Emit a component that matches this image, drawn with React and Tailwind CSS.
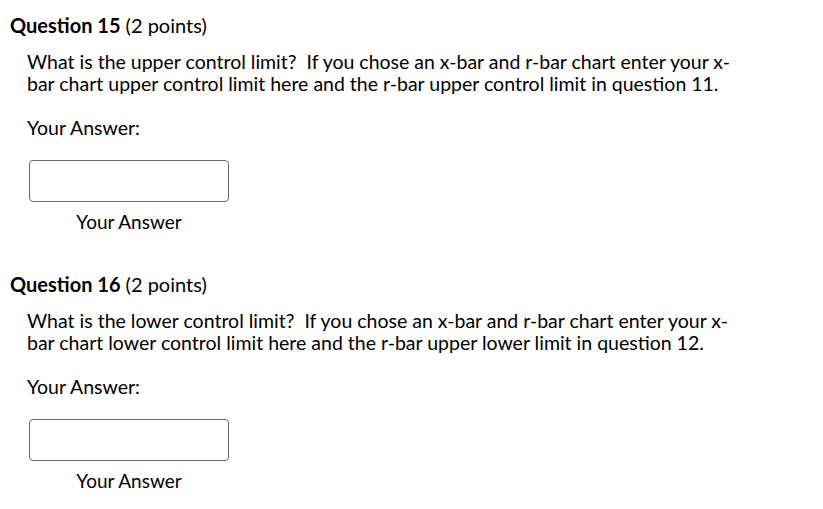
export default function App() {
  const questions = [
    {
      num: 15,
      lines: [
        'What is the upper control limit?\u00a0 If you chose an x-bar and r-bar chart enter your x-',
        'bar chart upper control limit here and the r-bar upper control limit in question 11.',
      ],
    },
    {
      num: 16,
      lines: [
        'What is the lower control limit?\u00a0 If you chose an x-bar and r-bar chart enter your x-',
        'bar chart lower control limit here and the r-bar upper lower limit in question 12.',
      ],
    },
  ]

  return (
    <div className="w-[823px] h-[509px] bg-white text-black font-['Lato','Liberation_Sans',sans-serif] pt-[13px]">
      {questions.map((q) => (
        <div key={q.num} className="pl-[10px] h-[259px]">
          <div className="text-[20px] leading-[24px]">
            <span className="font-bold">Question {q.num}</span> (2 points)
          </div>
          <div className="pl-[17px] pt-[14px]">
            <p className="text-[19.5px] leading-[22px]">
              {q.lines[0]}
              <br />
              {q.lines[1]}
            </p>
            <p className="text-[19.5px] leading-[22px] mt-[22px]">Your Answer:</p>
            <div className="mt-[21px] flex flex-col items-center w-[200px] ml-[2px]">
              <input
                type="text"
                className="w-[200px] h-[42px] border border-[#6b6b6b] rounded-[4px] bg-white"
              />
              <span className="text-[19px] leading-[22px] mt-[9px]">Your Answer</span>
            </div>
          </div>
        </div>
      ))}
    </div>
  )
}
